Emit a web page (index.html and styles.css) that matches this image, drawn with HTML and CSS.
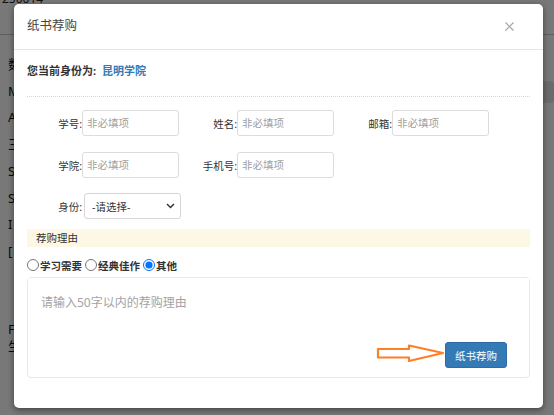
FILE: index.html
```html
<!DOCTYPE html>
<html lang="zh-CN">
<head>
<meta charset="utf-8">
<title>纸书荐购</title>
<link rel="stylesheet" href="styles.css">
</head>
<body>
<div class="page">
  <div class="topbar"><span class="top-text">250014</span></div>
  <div class="content">
    <ul class="side">
      <li>数</li>
      <li>M</li>
      <li>A</li>
      <li>三</li>
      <li>S</li>
      <li>S</li>
      <li>I</li>
      <li>[</li>
    </ul>
    <div class="main">
      <div class="right-box"></div>
    </div>
  </div>
  <ul class="side side-low">
    <li>F</li>
    <li>生</li>
  </ul>
  <div class="bottom-row"><span class="warn-btn"></span></div>
</div>

<div class="backdrop"></div>

<div class="modal">
  <div class="modal-header">
    <span class="modal-title">纸书荐购</span>
    <span class="close">
      <svg width="9" height="9" viewBox="0 0 9 9"><path d="M0.5 0.5 L8.5 8.5 M8.5 0.5 L0.5 8.5" stroke="#a6a6a6" stroke-width="1.2" fill="none"/></svg>
    </span>
  </div>
  <div class="modal-body">
    <div class="identity"><b>您当前身份为:</b> <a class="org">昆明学院</a></div>
    <div class="dotted"></div>
    <div class="form-grid">
      <div class="field"><label>学号:</label><input class="txt" placeholder="非必填项"></div>
      <div class="field"><label>姓名:</label><input class="txt" placeholder="非必填项"></div>
      <div class="field"><label>邮箱:</label><input class="txt" placeholder="非必填项"></div>
      <div class="field"><label>学院:</label><input class="txt" placeholder="非必填项"></div>
      <div class="field"><label>手机号:</label><input class="txt" placeholder="非必填项"></div>
      <div class="field empty"></div>
      <div class="field sel-field"><label>身份:</label>
        <div class="select"><span>-请选择-</span>
          <svg width="9" height="6" viewBox="0 0 9 6"><path d="M1 1 L4.5 4.6 L8 1" stroke="#333" stroke-width="1.4" fill="none"/></svg>
        </div>
      </div>
    </div>
    <div class="reason-bar">荐购理由</div>
    <div class="radios">
      <label><input type="radio" name="r">学习需要</label>
      <label><input type="radio" name="r">经典佳作</label>
      <label><input type="radio" name="r" checked>其他</label>
    </div>
    <div class="reason-box">
      <textarea class="reason-text" placeholder="请输入50字以内的荐购理由"></textarea>
      <div class="btn-row"><button class="btn-primary">纸书荐购</button></div>
    </div>
  </div>
  <svg class="arrow" width="70" height="20" viewBox="0 0 70 20">
    <path d="M2 5 L33 5 L33 1.5 L67 9 L33 17 L33 13.5 L2 13.5 Z" fill="none" stroke="#ff7f27" stroke-width="2.2" stroke-linejoin="round"/>
  </svg>
</div>
</body>
</html>
```

FILE: styles.css
```css
* { box-sizing: border-box; }
html, body { margin: 0; padding: 0; }
body {
  width: 554px;
  height: 415px;
  overflow: hidden;
  background: #fff;
  font-family: "Noto Sans", "Noto Sans CJK SC", sans-serif;
  color: #333;
  position: relative;
}

/* background page */
.page { width: 554px; height: 415px; }
.topbar {
  height: 43px;
  border-bottom: 1px solid #c8c8c8;
  padding-left: 2px;
}
.top-text {
  display: block;
  margin-top: -8px;
  font-size: 12px;
  line-height: 13px;
  color: #222;
}
.content { display: flex; }
.side {
  list-style: none;
  margin: 16px 0 0;
  padding: 0 0 0 8px;
  width: 120px;
  font-size: 13px;
  line-height: 26.7px;
  color: #111;
}
.side-low { margin-top: 56px; line-height: 17px; }
.main { flex: 1; display: flex; justify-content: flex-end; }
.right-box {
  margin-top: 46px;
  width: 60px;
  height: 22px;
  background: #e4e4e4;
  border-radius: 4px;
}
.bottom-row { padding-left: 49px; margin-top: 18px; }
.warn-btn {
  display: block;
  width: 72px;
  height: 20px;
  background: #e0a44a;
  border-radius: 3px;
}

.backdrop {
  position: absolute;
  inset: 0;
  background: rgba(0, 0, 0, 0.53);
}

/* modal */
.modal {
  position: absolute;
  left: 14px;
  top: 4px;
  width: 529px;
  height: 404px;
  background: #fff;
  border-radius: 5px;
  box-shadow: 0 2px 6px rgba(0, 0, 0, 0.45);
}
.modal-header {
  height: 46px;
  border-bottom: 1px solid #e5e5e5;
  display: flex;
  align-items: center;
  justify-content: space-between;
  padding: 0 29px 0 13px;
}
.modal-title {
  font-size: 12.5px;
  line-height: 16px;
  color: #444;
  padding-bottom: 1px;
}
.close { display: flex; padding-bottom: 1px; }

.modal-body { padding: 0 13px; }
.identity {
  margin-top: 13px;
  font-size: 11px;
  line-height: 16px;
  height: 16px;
  color: #333;
}
.identity b { font-weight: bold; }
.org { color: #337ab7; font-weight: bold; margin-left: 3px; }
.dotted {
  margin-top: 17px;
  border-top: 1px dotted #d6d6d6;
}

.form-grid {
  margin-top: 13px;
  display: grid;
  grid-template-columns: repeat(3, 155px);
  row-gap: 16px;
}
.field {
  display: flex;
  align-items: center;
  height: 26px;
}
.field label {
  width: 55px;
  text-align: right;
  font-size: 10.5px;
  color: #333;
  white-space: nowrap;
}
.txt {
  width: 97px;
  height: 26px;
  border: 1px solid #dcdcdc;
  border-radius: 3px;
  padding: 0 4px;
  font-family: inherit;
  font-size: 10.5px;
  outline: none;
}
.txt::placeholder { color: #a0a0a0; }
.sel-field { margin-top: -1px; }
.select {
  margin-left: 2px;
  width: 97px;
  height: 26px;
  border: 1px solid #d6d6d6;
  border-radius: 3px;
  display: flex;
  align-items: center;
  justify-content: space-between;
  padding: 0 5px 0 7px;
  font-size: 10.5px;
  color: #333;
}

.reason-bar {
  margin-top: 10px;
  height: 18px;
  background: #fdf7e5;
  font-size: 10.5px;
  line-height: 18px;
  padding-left: 9px;
  color: #333;
}
.radios {
  margin-top: 10px;
  height: 16px;
  display: flex;
  align-items: center;
  font-size: 10.5px;
  font-weight: bold;
  color: #333;
}
.radios label { display: flex; align-items: center; margin-right: 3px; }
.radios input {
  margin: 0 1px 0 0;
  width: 12px;
  height: 12px;
}

.reason-box {
  margin-top: 4px;
  height: 101px;
  border: 1px solid #e8e8e8;
  border-radius: 4px;
  display: flex;
  flex-direction: column;
}
.reason-text {
  flex: 1;
  border: none;
  resize: none;
  outline: none;
  padding: 17px 13px 0;
  font-family: inherit;
  font-size: 12px;
  line-height: 16px;
}
.reason-text::placeholder { color: #a3a3a3; }
.btn-row {
  display: flex;
  justify-content: flex-end;
  padding: 0 22px 9px 0;
}
.btn-primary {
  width: 62px;
  height: 26px;
  background: #337ab7;
  border: 1px solid #2e6da4;
  border-radius: 3px;
  color: #fff;
  font-family: inherit;
  font-size: 10.5px;
  padding: 0;
}

.arrow {
  position: absolute;
  left: 362px;
  top: 340px;
}
```
